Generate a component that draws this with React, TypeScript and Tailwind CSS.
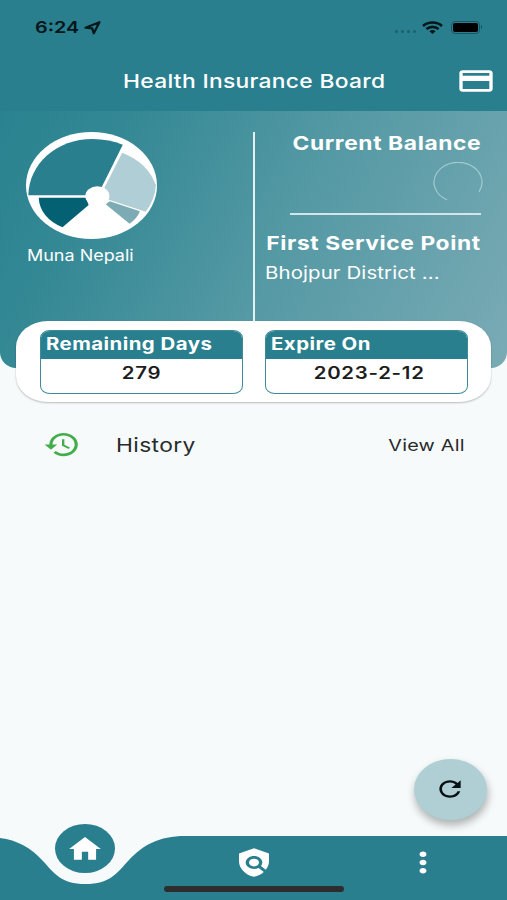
import React from 'react';
import clsx from 'clsx';

interface GlyphProps {
    d: string;
    className?: string;
}

// Icons are wider than tall, so the 24x24 viewBox is stretched to its box
const Glyph: React.FC<GlyphProps> = ({ d, className }) => (
    <svg viewBox="0 0 24 24" preserveAspectRatio="none" fill="currentColor" className={clsx('shrink-0', className)}>
        <path d={d} />
    </svg>
);

const icons = {
    card: 'M20 4H4c-1.11 0-1.99.89-1.99 2L2 18c0 1.11.89 2 2 2h16c1.11 0 2-.89 2-2V6c0-1.11-.89-2-2-2zm0 14H4v-6h16v6zm0-10H4V6h16v2z',
    history: 'M13 3c-4.97 0-9 4.03-9 9H1l3.89 3.89.07.14L9 12H6c0-3.87 3.13-7 7-7s7 3.13 7 7-3.13 7-7 7c-1.93 0-3.68-.79-4.94-2.06l-1.42 1.42C8.27 19.99 10.51 21 13 21c4.97 0 9-4.03 9-9s-4.03-9-9-9zm-1 5v5l4.28 2.54.72-1.21-3.5-2.08V8H12z',
    home: 'M10 20v-6h4v6h5v-8h3L12 3 2 12h3v8z',
    policy: 'M21 5l-9-4-9 4v6c0 5.55 3.84 10.74 9 12 2.3-.56 4.33-1.9 5.88-3.71l-3.12-3.12c-1.94 1.29-4.58 1.07-6.29-.64-1.95-1.95-1.95-5.12 0-7.07 1.95-1.95 5.12-1.95 7.07 0 1.71 1.71 1.92 4.35.64 6.29l2.9 2.9C20.29 15.69 21 13.38 21 11V5zM12 9a3 3 0 1 0 0 6a3 3 0 1 0 0-6z',
    more: 'M12 8c1.1 0 2-.9 2-2s-.9-2-2-2-2 .9-2 2 .9 2 2 2zm0 2c-1.1 0-2 .9-2 2s.9 2 2 2 2-.9 2-2-.9-2-2-2zm0 6c-1.1 0-2 .9-2 2s.9 2 2 2 2-.9 2-2-.9-2-2-2z',
    refresh: 'M17.65 6.35C16.2 4.9 14.21 4 12 4c-4.42 0-7.99 3.58-7.99 8s3.57 8 7.99 8c3.73 0 6.84-2.55 7.73-6h-2.08c-.82 2.33-3.04 4-5.65 4-3.31 0-6-2.69-6-6s2.69-6 6-6c1.66 0 3.14.69 4.22 1.78L13 11h7V4l-2.35 2.35z',
};

const StatusBar: React.FC = () => (
    <div className="flex h-[54px] items-center justify-between pl-[35px] pr-[25px] text-[#06171b]">
        <div className="flex items-center">
            <span className="w-[49px] origin-left scale-x-[1.2] text-[16.5px] leading-5 font-semibold">6:24</span>
            <svg viewBox="0 0 16 14" className="mt-[1px] h-[14px] w-[17px]" preserveAspectRatio="none" fill="none" stroke="currentColor" strokeWidth="2.1" strokeLinejoin="round">
                <path d="M1.5 6.8L14.5 1.2L9.2 12.4L7.8 7.4Z" />
            </svg>
        </div>
        <div className="flex items-center">
            <div className="mt-2 mr-[6px] flex gap-[3px]">
                {[0, 1, 2, 3].map((dot) => (
                    <span key={dot} className="h-[3px] w-[3px] rounded-full bg-[#1c5f6c]" />
                ))}
            </div>
            <svg viewBox="0 0 21 13" className="mr-[8px] h-[13px] w-[21px]" fill="none" stroke="currentColor" strokeWidth="2.6">
                <path d="M1 4.9C6.3.3 14.7.3 20 4.9M4.4 8.1C7.9 5.1 13.1 5.1 16.6 8.1" />
                <path d="M7.4 10.3Q10.5 7.8 13.6 10.3L10.5 13Z" fill="currentColor" stroke="none" />
            </svg>
            <div className="h-[13px] w-[29px] rounded-[4px] border border-[#1a5562] p-[1px]">
                <div className="h-full rounded-[2px] bg-black" />
            </div>
            <span className="ml-[1px] h-1 w-[1.5px] rounded-r bg-[#1a5562]" />
        </div>
    </div>
);

const Avatar: React.FC = () => (
    <svg viewBox="79 95 391 321" preserveAspectRatio="none" className="h-[107px] w-[131px]">
        <ellipse cx="274.5" cy="255.5" rx="195.5" ry="160.5" fill="#fff" />
        <path d="M86 285C88 190 170 116 278 116Q327 117 368 133L304 262L258 285Z" fill="#297f8e" />
        <path d="M366 157L313 262L326 298L436 334Q463 301 467 255Q442 186 366 157Z" fill="#b0ced5" />
        <path d="M117 292H258L266 314L188 381Q120 351 117 292Z" fill="#036173" />
        <path d="M329 303L419 333Q410 356 388 370L317 312Z" fill="#7dabb4" />
        <ellipse cx="292" cy="287" rx="36" ry="29" fill="#fff" />
    </svg>
);

const Summary: React.FC = () => (
    <section className="flex h-[257px] rounded-b-[16px] bg-[linear-gradient(118deg,#2a8290_0%,#338894_20%,#5298a3_52%,#7aabb5_100%)] pt-[21px] text-white">
        <div className="w-[253px] shrink-0 pl-[26px]">
            <Avatar />
            <p className="mt-[5px] ml-[0.5px] w-max origin-left scale-x-[1.16] text-[15.5px] leading-6">Muna Nepali</p>
        </div>
        <div className="h-[190px] w-[2px] shrink-0 bg-[#e3f1f3]" />
        <div className="flex grow flex-col items-end pr-[26px]">
            <h2 className="w-max origin-right scale-x-[1.2] text-[19px] leading-6 font-bold tracking-[0.5px]">Current Balance</h2>
            <svg viewBox="0 0 50 42" className="mt-[6px] -mr-[2px] h-[42px] w-[50px]" fill="none" stroke="#a4cbd1" strokeWidth="1.2">
                <path d="M14 37.8A24 19.8 0 1 1 46 29.8" />
            </svg>
            <div className="mt-[9px] h-[2px] w-[191px] bg-[#d3e5e9]" />
            <h2 className="mt-[17px] w-max origin-right scale-x-[1.2] text-[19px] leading-6 font-bold tracking-[0.5px]">First Service Point</h2>
            <p className="mt-[5px] w-[216.5px] text-[17px] leading-6">
                <span className="block w-max origin-left scale-x-[1.2] tracking-[0.1px]">Bhojpur District ...</span>
            </p>
        </div>
    </section>
);

interface InfoBoxProps {
    label: string;
    value: string;
    valueClass?: string;
}

const InfoBox: React.FC<InfoBoxProps> = ({ label, value, valueClass }) => (
    <div className="h-[64px] w-[203px] overflow-hidden rounded-[10px/8px] border-[1.5px] border-[#3d8b98] bg-white">
        <div className="h-[28px] bg-[#297f8e] pl-[5px] text-white">
            <span className="block w-max origin-left scale-x-[1.2] text-[17px] leading-[26px] font-bold tracking-[0.38px]">{label}</span>
        </div>
        <div className={clsx('flex justify-center', valueClass)}>
            <span className="scale-x-[1.2] text-[17px] leading-[29px] font-semibold tracking-[0.6px] text-[#1d1d1d]">{value}</span>
        </div>
    </div>
);

const BottomNav: React.FC = () => (
    <nav className="relative h-[64px] text-white">
        <svg viewBox="0 0 507 64" preserveAspectRatio="none" className="absolute inset-0 h-full w-full">
            <path d="M0 2C17 4 31 12 42 24C55 38 61 48 85.5 48C110 48 116 38 129 24C143 9 159 0 185 0H507V64H0Z" fill="#297f8e" />
        </svg>
        <div className="relative grid h-full grid-cols-3 justify-items-center">
            <button className="-mt-[12px] flex h-[49px] w-[60px] items-center justify-center rounded-[50%] bg-[#297f8e]">
                <Glyph d={icons.home} className="h-8 w-[38px]" />
            </button>
            <Glyph d={icons.policy} className="mt-[11px] h-[31px] w-[40px]" />
            <Glyph d={icons.more} className="mt-[10px] h-[33px] w-[42px]" />
        </div>
        <div className="absolute bottom-[8px] left-[164px] h-[6px] w-[180px] rounded-full bg-[#2d2d2d]" />
    </nav>
);

const App: React.FC = () => {
    return (
        <div className="flex h-[900px] w-[507px] flex-col overflow-hidden bg-[#f6fafb] font-['Inter',sans-serif]">
            <header className="h-[111px] bg-[#297f8e] text-white">
                <StatusBar />
                <div className="flex h-[54px] items-center pr-[11px] pl-[123px]">
                    <h1 className="w-max origin-left scale-x-[1.2] pt-[2px] text-[19px] leading-6 font-medium tracking-[0.26px] whitespace-nowrap">Health Insurance Board</h1>
                    <Glyph d={icons.card} className="ml-auto h-8 w-[40px]" />
                </div>
            </header>
            <Summary />
            <section className="relative mx-4 -mt-[47px] flex h-[81px] justify-between rounded-[32px/26px] bg-white pt-[9px] pr-[23px] pl-6 shadow-[0_1px_2px_rgba(0,0,0,0.25)]">
                <InfoBox label="Remaining Days" value="279" />
                <InfoBox label="Expire On" value="2023-2-12" valueClass="pl-[6px]" />
            </section>
            <div className="mt-[26px] flex h-[33px] items-center pl-[43px] text-[#272b2c]">
                <Glyph d={icons.history} className="h-[31px] w-[38px] text-[#43ad4c]" />
                <span className="mt-[2px] ml-[34.5px] origin-left scale-x-[1.2] text-[19px] leading-6 tracking-[0.3px]">History</span>
                <span className="mr-[42px] ml-auto origin-right scale-x-[1.2] text-[16.5px] leading-6 tracking-[0.2px]">View All</span>
            </div>
            <div className="mt-auto flex justify-end pr-[20px] pb-[16px]">
                <button className="flex h-[61px] w-[73px] items-center justify-center rounded-[50%] bg-[#b0cfd4] pr-[1px] pb-[1px] text-[#071014] shadow-[1px_5px_8px_rgba(0,0,0,0.3)]">
                    <Glyph d={icons.refresh} className="h-[26px] w-8" />
                </button>
            </div>
            <BottomNav />
        </div>
    );
};

export default App;
